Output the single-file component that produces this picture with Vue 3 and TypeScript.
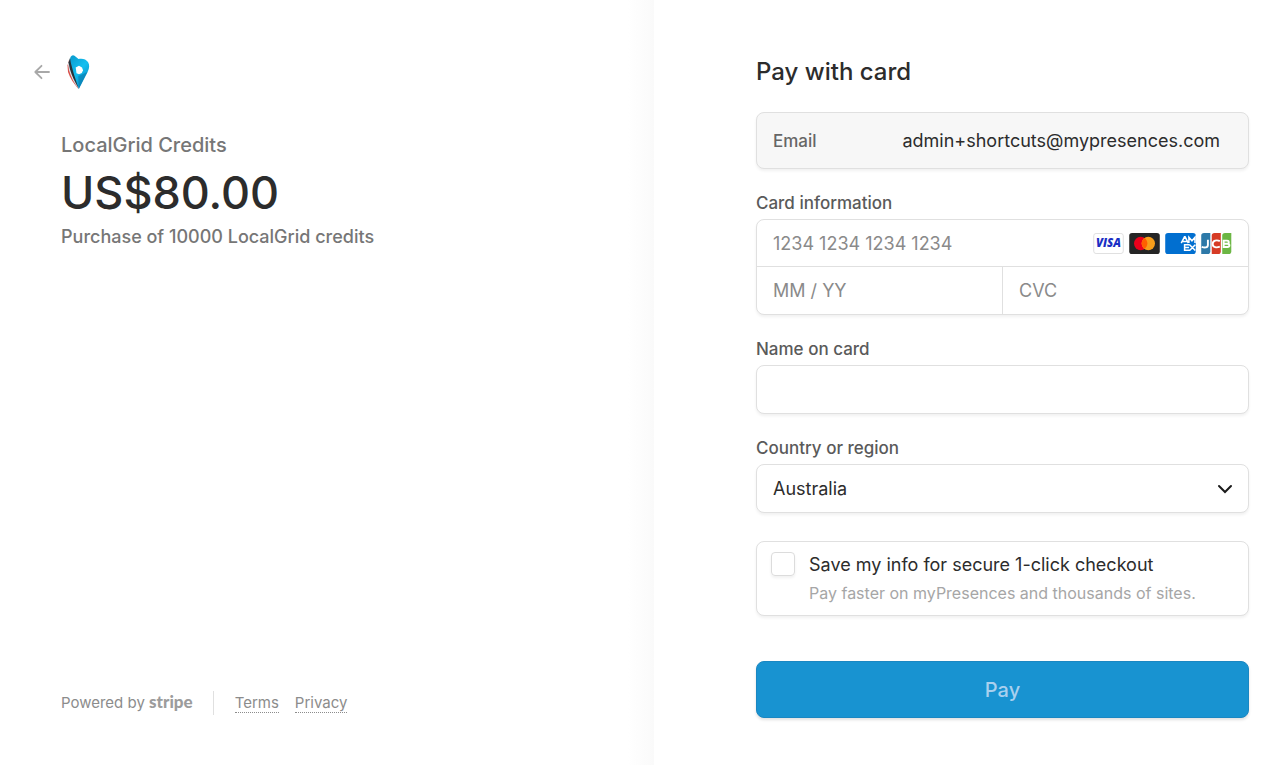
<script setup lang="ts">
import { ref } from 'vue'

const cardNumber = ref('')
const expiry = ref('')
const cvc = ref('')
const cardName = ref('')
const country = ref('Australia')
const saveInfo = ref(false)
const countries: string[] = ['Australia', 'Canada', 'New Zealand', 'United Kingdom', 'United States']
</script>

<template>
  <div class="checkout">
    <section class="summary">
      <header class="merchant">
        <a href="#" class="back" aria-label="Back">
          <svg width="16" height="16" viewBox="0 0 16 16" fill="none" stroke="#a8a8a8" stroke-width="1.800" stroke-linecap="round" stroke-linejoin="round">
            <path d="M15 8H1.500M7.500 1.800L1.300 8l6.200 6.200" />
          </svg>
        </a>
        <svg class="logo" width="24" height="36" viewBox="0 0 24 36" aria-hidden="true">
          <defs>
            <linearGradient id="pin" x1="0.2" y1="0" x2="0.8" y2="1">
              <stop offset="0" stop-color="#0b9fd2" />
              <stop offset="0.45" stop-color="#14bff0" />
              <stop offset="1" stop-color="#0784bb" />
            </linearGradient>
          </defs>
          <path d="M3 6L1.500 11.500 2 18c2 6 6 12 10.500 17L9 15z" fill="#d9504a" />
          <path d="M3.500 4.500L2 10l1 6c2 7 5 13 9 18L9 12z" fill="#dfeaee" />
          <path d="M4 4L2.500 8.500l1.500 7c2 7 5 13 8.500 18.500L9 10z" fill="#26333b" />
          <path d="M4.200 4C5 1.500 7 .6 8.500 1.800L12.500 5c4-1 7.500.2 9.500 3 1.800 3 1.400 6-.2 9.500L12.800 35C10.500 28 7.800 20.500 6.200 14 5.200 10 4.200 7 4.200 4z" fill="url(#pin)" />
          <path d="M21.500 18L12.800 35l-.5-13z" fill="#0876a9" opacity=".55" />
          <path d="M9.700 13.500l3.300-1.700 3 1.700 1 2.800-1.200 2.700-2.800 1.200-2.500-1z" fill="#fff" />
        </svg>
      </header>
      <div class="order">
        <h1 class="product">LocalGrid Credits</h1>
        <p class="amount">US$80.00</p>
        <p class="description">Purchase of 10000 LocalGrid credits</p>
      </div>
      <footer class="legal">
        <span class="powered">Powered by <b class="stripe">stripe</b></span>
        <nav class="links">
          <a href="#">Terms</a>
          <a href="#">Privacy</a>
        </nav>
      </footer>
    </section>

    <main class="payment">
      <h2 class="title">Pay with card</h2>
      <form @submit.prevent>
        <div class="box email">
          <span class="email-label">Email</span>
          <span class="email-value">admin+shortcuts@mypresences.com</span>
        </div>

        <fieldset class="group">
          <legend class="label">Card information</legend>
          <div class="box card">
            <div class="number">
              <input v-model="cardNumber" type="text" placeholder="1234 1234 1234 1234" aria-label="Card number" />
              <div class="brands">
                <svg width="31" height="21" viewBox="0 0 32 22" role="img" aria-label="Visa">
                  <rect x=".5" y=".5" width="31" height="21" rx="2.500" fill="#fff" stroke="#dedede" />
                  <text x="16" y="15" text-anchor="middle" class="visa">VISA</text>
                </svg>
                <svg width="31" height="21" viewBox="0 0 32 22" role="img" aria-label="Mastercard">
                  <rect width="32" height="22" rx="3" fill="#252525" />
                  <circle cx="12" cy="11" r="7" fill="#eb001b" />
                  <circle cx="20" cy="11" r="7" fill="#f79e1b" />
                  <path d="M16 5.260a7 7 0 0 1 0 11.480a7 7 0 0 1 0-11.480z" fill="#ff5f00" />
                </svg>
                <svg width="31" height="21" viewBox="0 0 32 22" role="img" aria-label="American Express">
                  <rect width="32" height="22" rx="3" fill="#016fd0" />
                  <g fill="none" stroke="#fff" stroke-width="1.600">
                    <path d="M16.800 10.600l3.400-6.600h.6l3.400 6.600M18.500 8.800h4.200M24.800 10.600V4.500l3.200 3.600 3.200-3.600v6.100" />
                    <path d="M25.500 12.300h-5.200v5.700h5.200M20.300 15.100h4.700M25.500 12.300l6 6M31.500 12.300l-6 6" />
                  </g>
                </svg>
                <svg width="31" height="21" viewBox="0 0 32 22" role="img" aria-label="JCB">
                  <path d="M3 0h6.500v19a3 3 0 0 1-3 3H0V3a3 3 0 0 1 3-3z" fill="#2d79a8" />
                  <path d="M14 0h6.500v19a3 3 0 0 1-3 3H11V3a3 3 0 0 1 3-3z" fill="#d63b25" />
                  <path d="M25 0h6.500v19a3 3 0 0 1-3 3H22V3a3 3 0 0 1 3-3z" fill="#6cb644" />
                  <g fill="none" stroke="#fff" stroke-width="2">
                    <path d="M7 7v5.500c0 3-3.500 3.200-6.500 2" />
                    <path d="M19.500 8.500c-3-1.500-7.500-1-7.500 3s4.500 4 7.500 2.800" />
                    <path d="M23.500 8h3.500c2.500 0 2.500 3.200 0 3.200h-3.500h4c2.700 0 2.700 3.500 0 3.500h-4z" />
                  </g>
                </svg>
              </div>
            </div>
            <div class="details">
              <input v-model="expiry" type="text" placeholder="MM / YY" aria-label="Expiration" />
              <input v-model="cvc" type="text" placeholder="CVC" aria-label="CVC" />
            </div>
          </div>
        </fieldset>

        <div class="group">
          <label class="label" for="name">Name on card</label>
          <input id="name" v-model="cardName" class="box field" type="text" />
        </div>

        <div class="group">
          <label class="label" for="country">Country or region</label>
          <div class="select">
            <select id="country" v-model="country" class="box field">
              <option v-for="item in countries" :key="item">{{ item }}</option>
            </select>
            <svg class="chevron" width="16" height="10" viewBox="0 0 16 10" fill="none" stroke="#1a1a1a" stroke-width="2" stroke-linecap="round">
              <path d="M2 2l6 6 6-6" />
            </svg>
          </div>
        </div>

        <div class="box save">
          <input id="save" v-model="saveInfo" type="checkbox" />
          <label for="save">
            <span class="save-title">Save my info for secure 1-click checkout</span>
            <span class="save-note">Pay faster on myPresences and thousands of sites.</span>
          </label>
        </div>

        <button class="pay" type="submit">Pay</button>
      </form>
    </main>
  </div>
</template>

<style>
body {
  margin: 0;
  background: #fff;
}
</style>

<style scoped>
* {
  box-sizing: border-box;
}

.checkout {
  display: grid;
  grid-template-columns: minmax(0, 654fr) minmax(0, 626fr);
  min-height: 100vh;
  font-family: Inter, "Liberation Sans", sans-serif;
  color: #2c2c2c;
}

h1, h2, p {
  margin: 0;
  font-weight: 500;
}

input, select, button {
  font: inherit;
  color: inherit;
}

.summary {
  display: flex;
  flex-direction: column;
  padding: 52px 32px 50px 61px;
  background: linear-gradient(to left, #fafafa, #fff 26px);
}

.merchant {
  display: flex;
  align-items: center;
  gap: 16px;
  height: 40px;
  margin-left: -27px;
}

.back, .logo {
  display: block;
}

.back svg {
  display: block;
}

.order {
  flex: 1;
  padding-top: 40px;
}

.product {
  font-size: 20px;
  line-height: 26px;
  color: #767676;
}

.amount {
  padding: 7px 0 4px;
  font-size: 45px;
  line-height: 56px;
}

.description {
  font-size: 18px;
  line-height: 24px;
  color: #767676;
}

.legal {
  display: flex;
  align-items: center;
  font-size: 15px;
  line-height: 24px;
  color: #8c8c8c;
}

.powered {
  padding-right: 20px;
  border-right: 1px solid #e0e0e0;
}

.stripe {
  font-family: Lato, sans-serif;
  font-size: 17px;
  line-height: 20px;
  font-weight: 900;
  color: #9c9c9c;
}

.links {
  display: flex;
  gap: 16px;
  padding-left: 21px;
}

.links a {
  line-height: 18px;
  color: inherit;
  text-decoration: none;
  border-bottom: 1px dotted #8c8c8c;
}

.payment {
  padding: 56px 31px 47px 102px;
}

.title {
  font-size: 24px;
  line-height: 32px;
}

.box {
  border: 1px solid #e0e0e0;
  border-radius: 8px;
  background: #fff;
  box-shadow: 0 2px 3px rgba(0, 0, 0, 0.06);
}

.email {
  display: flex;
  align-items: center;
  justify-content: space-between;
  height: 57px;
  margin: 24px 0;
  padding: 0 28px 0 16px;
  background: #f7f7f7;
}

.email-label {
  font-size: 17px;
  font-weight: 500;
  color: #666;
}

.email-value {
  font-size: 18px;
}

.group {
  min-width: 0;
  margin: 0 0 24px;
  padding: 0;
  border: 0;
}

.label {
  display: block;
  padding: 0;
  font-size: 17px;
  line-height: 20px;
  font-weight: 500;
  color: #5a5a5a;
}

.group .box {
  margin-top: 6px;
}

.number, .details {
  display: flex;
  align-items: center;
  height: 47px;
}

.number {
  padding-right: 16px;
  border-bottom: 1px solid #e0e0e0;
}

.card input {
  flex: 1;
  min-width: 0;
  height: 100%;
  padding: 0 16px;
  border: 0;
  background: transparent;
  font-size: 18px;
}

.card input::placeholder {
  color: #8a8a8a;
  opacity: 1;
}

.details input + input {
  border-left: 1px solid #e0e0e0;
}

.brands {
  display: flex;
  gap: 5px;
}

.visa {
  font-family: "Open Sans", sans-serif;
  font-size: 12px;
  font-weight: 800;
  font-style: italic;
  fill: #1a2fc4;
}

.field {
  display: block;
  width: 100%;
  height: 49px;
  padding: 0 16px;
  font-size: 18px;
}

.select {
  display: grid;
  align-items: center;
}

.select > * {
  grid-area: 1 / 1;
}

.select select {
  appearance: none;
}

.chevron {
  justify-self: end;
  margin: 6px 16px 0 0;
  pointer-events: none;
}

.save {
  display: flex;
  gap: 14px;
  margin-top: 28px;
  padding: 10px 14px;
}

.save input {
  appearance: none;
  flex: none;
  width: 24px;
  height: 24px;
  margin: 0;
  border: 1px solid #dcdcdc;
  border-radius: 4px;
  box-shadow: 0 2px 3px rgba(0, 0, 0, 0.06);
}

.save span {
  display: block;
}

.save-title {
  font-size: 18px;
  line-height: 26px;
}

.save-note {
  padding-top: 3px;
  font-size: 16px;
  line-height: 24px;
  color: #a6a6a6;
}

.pay {
  display: block;
  width: 100%;
  height: 57px;
  margin-top: 45px;
  border: 1px solid #1a87c2;
  border-radius: 8px;
  background: #1893d1;
  box-shadow: 0 2px 3px rgba(0, 0, 0, 0.12);
  font-size: 20px;
  font-weight: 500;
  color: #a9d0ee;
}
</style>
